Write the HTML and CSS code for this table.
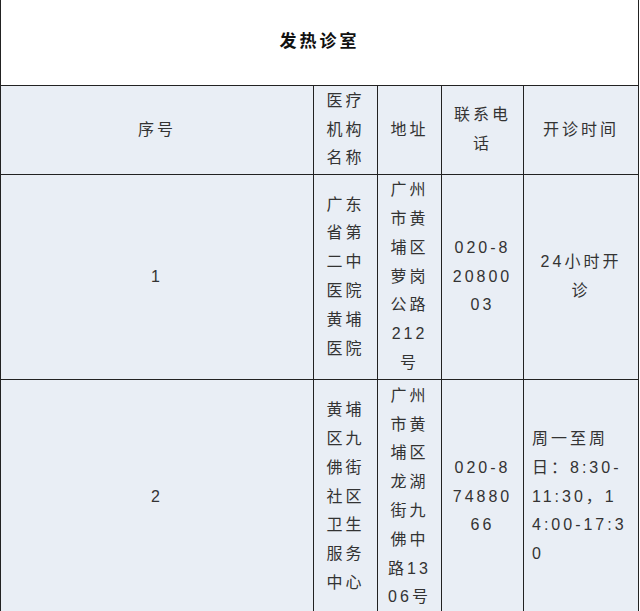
FILE: index.html
```html
<!DOCTYPE html>
<html lang="zh-CN">
<head>
<meta charset="utf-8">
<title>发热诊室</title>
<link rel="stylesheet" href="styles.css">
</head>
<body>
<table class="clinic">
  <colgroup>
    <col class="c-no">
    <col class="c-name">
    <col class="c-addr">
    <col class="c-tel">
    <col class="c-time">
  </colgroup>
  <thead>
    <tr><th colspan="5" class="title">发热诊室</th></tr>
    <tr class="head">
      <th>序号</th>
      <th>医疗机构名称</th>
      <th>地址</th>
      <th>联系电话</th>
      <th>开诊时间</th>
    </tr>
  </thead>
  <tbody>
    <tr>
      <td>1</td>
      <td>广东省第二中医院黄埔医院</td>
      <td>广州市黄埔区萝岗公路212号</td>
      <td>020-82080003</td>
      <td>24小时开诊</td>
    </tr>
    <tr>
      <td>2</td>
      <td>黄埔区九佛街社区卫生服务中心</td>
      <td>广州市黄埔区龙湖街九佛中路1306号</td>
      <td>020-87488066</td>
      <td class="left">周一至周日：8:30-11:30，14:00-17:30</td>
    </tr>
  </tbody>
</table>
</body>
</html>
```
FILE: styles.css
```css
html, body {
  margin: 0;
  padding: 0;
  background: #ffffff;
}

body {
  font-family: "Liberation Sans", "Noto Sans CJK SC", sans-serif;
}

.clinic {
  border-collapse: collapse;
  table-layout: fixed;
  width: 639px;
}

.c-no { width: 313px; }
.c-name { width: 64px; }
.c-addr { width: 64px; }
.c-tel { width: 82px; }
.c-time { width: 115px; }

.clinic th,
.clinic td {
  border: 1px solid #222222;
  padding: 1.5px 8px;
  background: #e9eef5;
  color: #333333;
  font-weight: normal;
  font-size: 16px;
  letter-spacing: 3px;
  line-height: 28.8px;
  text-align: center;
  vertical-align: middle;
  word-break: break-all;
}

.clinic .title {
  background: #ffffff;
  border-top: 0;
  color: #111111;
  font-size: 17px;
  font-weight: bold;
  padding: 28px 8px 28px;
}

.clinic .head th {
  line-height: 28.3px;
}

.clinic .left {
  text-align: left;
}
```
